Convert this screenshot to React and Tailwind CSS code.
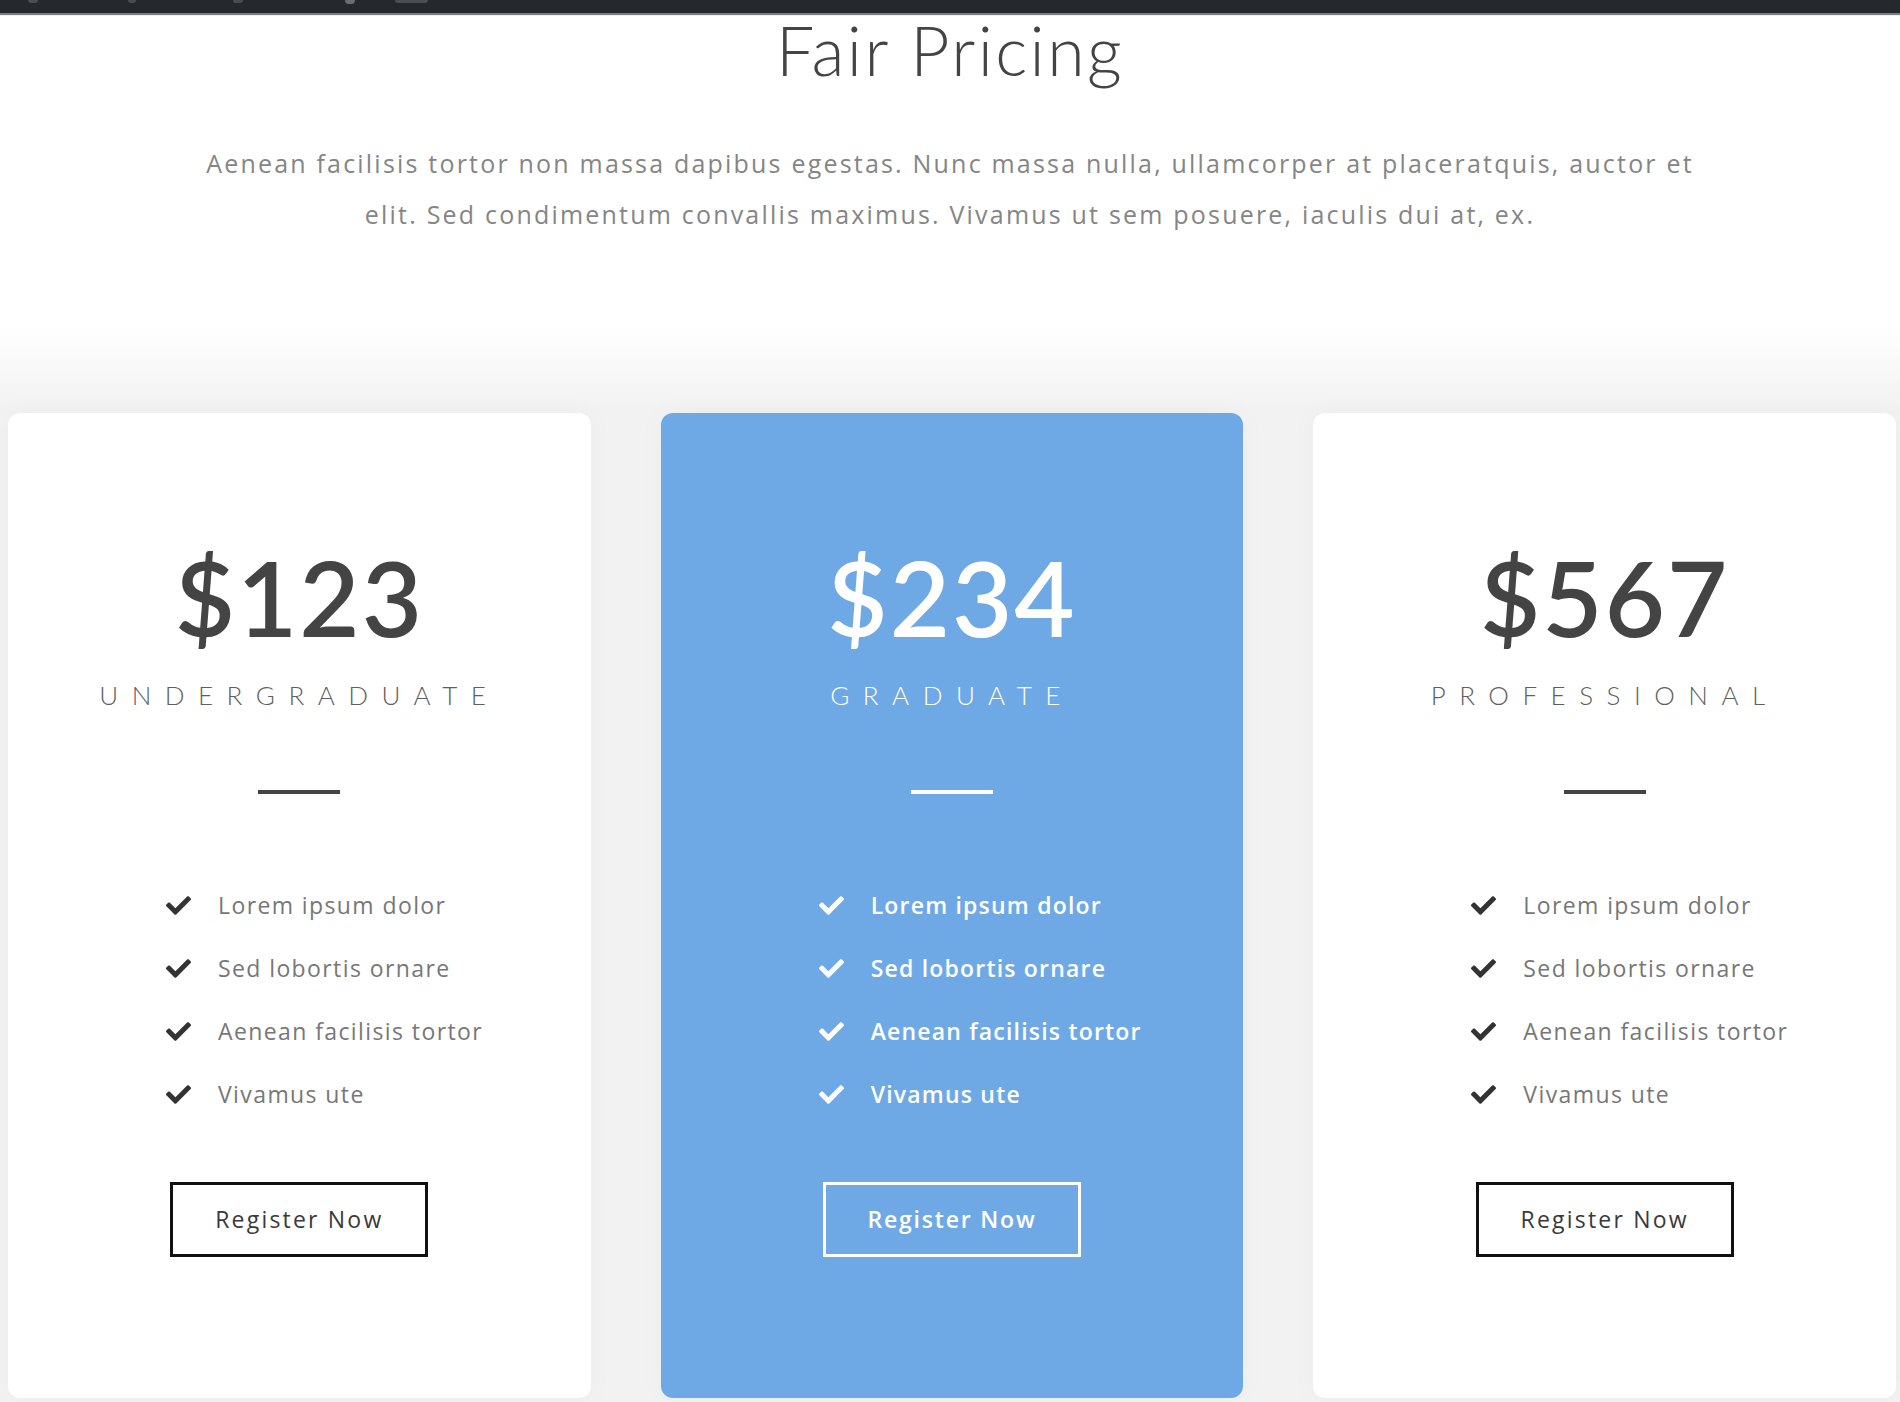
import { FaCheck } from "react-icons/fa";

const plans = [
  { price: "$123", name: "UNDERGRADUATE", featured: false },
  { price: "$234", name: "GRADUATE", featured: true },
  { price: "$567", name: "PROFESSIONAL", featured: false },
];

const features = [
  "Lorem ipsum dolor",
  "Sed lobortis ornare",
  "Aenean facilisis tortor",
  "Vivamus ute",
];

function Card({ plan }) {
  const f = plan.featured;
  return (
    <div
      className={
        f
          ? "h-[985px] rounded-[12px] bg-[#6fa9e5] pt-[132px] shadow-[0_0_30px_rgba(0,0,0,0.03)]"
          : "h-[985px] rounded-[12px] bg-white pt-[132px] shadow-[0_0_30px_rgba(0,0,0,0.03)]"
      }
    >
      <div
        className={
          f
            ? "text-center font-['Lato',sans-serif] text-[104px] leading-none font-semibold tracking-[2px] text-white"
            : "text-center font-['Lato',sans-serif] text-[104px] leading-none font-semibold tracking-[2px] text-[#444444]"
        }
      >
        {plan.price}
      </div>
      <div
        className={
          f
            ? "mt-[33px] text-center font-['Lato',sans-serif] text-[26px] leading-none font-light tracking-[13.5px] text-white"
            : "mt-[33px] text-center font-['Lato',sans-serif] text-[26px] leading-none font-light tracking-[13.5px] text-[#5f5f5f]"
        }
      >
        {plan.name}
      </div>
      <div
        className={
          f
            ? "mx-auto mt-[82px] h-[4px] w-[82px] bg-white"
            : "mx-auto mt-[82px] h-[4px] w-[82px] bg-[#444444]"
        }
      />
      <ul className="mt-[80px] pl-[158px]">
        {features.map((t) => (
          <li key={t} className="flex h-[63px] items-center">
            <FaCheck
              className={f ? "h-[25px] w-[25px] shrink-0 text-white" : "h-[25px] w-[25px] shrink-0 text-[#333333]"}
            />
            <span
              className={
                f
                  ? "ml-[27px] font-['Open_Sans',sans-serif] text-[23px] font-semibold tracking-[1.2px] text-white"
                  : "ml-[27px] font-['Open_Sans',sans-serif] text-[23px] tracking-[1.4px] text-[#777777]"
              }
            >
              {t}
            </span>
          </li>
        ))}
      </ul>
      <button
        className={
          f
            ? "mx-auto mt-[56px] flex h-[75px] w-[258px] items-center justify-center border-[3px] border-white font-['Open_Sans',sans-serif] text-[23px] font-semibold tracking-[1.8px] text-white"
            : "mx-auto mt-[56px] flex h-[75px] w-[258px] items-center justify-center border-[3px] border-[#111111] font-['Open_Sans',sans-serif] text-[23px] tracking-[2.2px] text-[#3a3a3a]"
        }
      >
        Register Now
      </button>
    </div>
  );
}

export default function App() {
  return (
    <div className="w-[1900px] min-h-[1402px] bg-white">
      <div className="flex h-[13px] items-start bg-[#25292e]">
        <span className="ml-[28px] h-[3px] w-[10px] rounded-b bg-[#4a4e53]" />
        <span className="ml-[90px] h-[3px] w-[8px] rounded-b bg-[#4a4e53]" />
        <span className="ml-[97px] h-[3px] w-[10px] rounded-b bg-[#4a4e53]" />
        <span className="ml-[102px] h-[4px] w-[10px] rounded-b bg-[#6a6e73]" />
        <span className="ml-[40px] h-[3px] w-[33px] rounded-b bg-[#4a4e53]" />
      </div>
      <div className="h-[2px] bg-[#7b7e82]" />
      <div className="h-[1px] bg-[#eeeeee]" />

      <h1 className="text-center font-['Lato',sans-serif] text-[68px] leading-none font-light tracking-[2.4px] text-[#444444]">
        Fair Pricing
      </h1>

      <p className="mt-[54px] text-center font-['Open_Sans',sans-serif] text-[25px] leading-[51px] tracking-[2.2px] text-[#858585]">
        Aenean facilisis tortor non massa dapibus egestas. Nunc massa nulla, ullamcorper at placeratquis, auctor et
        <br />
        elit. Sed condimentum convallis maximus. Vivamus ut sem posuere, iaculis dui at, ex.
      </p>

      <section className="bg-[linear-gradient(to_bottom,#ffffff_0px,#ffffff_86px,#f2f2f2_168px,#f2f2f2_100%)] pt-[173px] pr-[4px] pb-[4px] pl-[8px]">
        <div className="grid grid-cols-3 gap-[70px]">
          {plans.map((p) => (
            <Card key={p.name} plan={p} />
          ))}
        </div>
      </section>
    </div>
  );
}
